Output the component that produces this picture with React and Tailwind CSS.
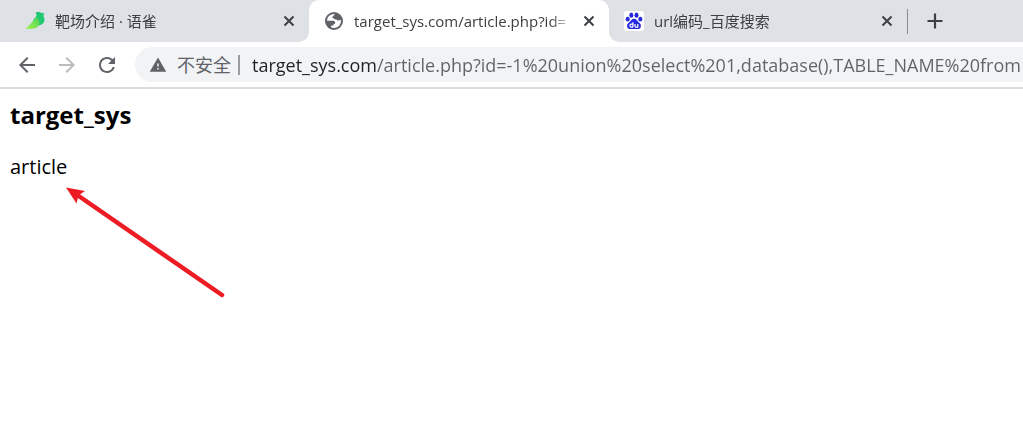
import { MdArrowBack, MdArrowForward, MdRefresh, MdWarning } from "react-icons/md";

function BirdIcon() {
  return (
    <svg viewBox="0 0 20 20" className="size-5 shrink-0" aria-hidden="true">
      <defs>
        <linearGradient id="wing" x1="0" y1="1" x2="1" y2="0">
          <stop offset="0" stopColor="#a5f04e" />
          <stop offset="1" stopColor="#48d35a" />
        </linearGradient>
      </defs>
      <path d="M10.600 2.400C11.200 1 12.600 0.600 14 0.900C15.600 1.200 16.200 2.300 19.400 2.300C19 3.200 18.500 3.800 18.600 4.800C18.800 6.600 19.800 7.600 19.400 9.700C18.900 12.300 16.500 14.300 13.500 14.600L8 9C9.800 7 11.800 5.200 11.600 3.900C11.500 3.300 11 2.900 10.600 2.400Z" fill="#21c872" />
      <path d="M11 6.400C14 7.600 15.600 11 13.900 14.200C12.200 17.400 8 18.300 0.800 17.900C3.600 14.500 8.200 10.500 11 6.400Z" fill="url(#wing)" />
    </svg>
  );
}

function GlobeIcon() {
  return (
    <svg viewBox="0 0 18 18" className="mx-px size-[18px] shrink-0" aria-hidden="true">
      <circle cx="9" cy="9" r="9" fill="#5f6368" />
      <path d="M10.200 2.100C9 2.600 8.500 3.200 8.800 4C8 4.200 7 4.500 7.200 5.800C8.500 6 9 6.500 9.200 7.300L11.500 7.400C12 8.500 13 8.800 14.500 8.300L15.900 7.800C16.500 12 13.500 16 9 16C7.800 16 6.800 15.700 6 15.300L6 13.700L8.500 13.600L8.600 12L10 11.800L10.200 10.400C9.500 9 8.500 8.700 7 8.800L2.100 8.800C2 4.800 5.500 1.600 10.200 2.100Z" fill="#fff" />
    </svg>
  );
}

function PawIcon() {
  return (
    <svg viewBox="0 0 20 20" className="size-5 shrink-0" aria-hidden="true">
      <rect width="20" height="20" rx="3" fill="#fff" />
      <g fill="#2529e0">
        <ellipse cx="7.300" cy="4.200" rx="2" ry="2.600" />
        <ellipse cx="12.500" cy="4.200" rx="2" ry="2.600" />
        <ellipse cx="3.700" cy="8.200" rx="2" ry="2.400" />
        <ellipse cx="16.300" cy="8.200" rx="2" ry="2.400" />
        <path d="M10 7.800C12.400 7.800 13 9.800 14.500 11.100C16.500 12.800 17.300 14 16.800 16C16 18.700 13.300 18 10 18S4 18.700 3.200 16C2.700 14 3.500 12.800 5.500 11.100C7 9.800 7.600 7.800 10 7.800Z" />
      </g>
      <path d="M8.900 11.300V16.200M8.900 13.200H7.300Q5.900 13.300 5.900 14.700T7.300 16.200H8.900M11 13V15.200Q11.100 16.200 12.100 16.200H13.800V13" fill="none" stroke="#fff" strokeWidth="1.200" />
    </svg>
  );
}

function CloseIcon() {
  return (
    <svg viewBox="0 0 18 18" className="size-[18px]" aria-hidden="true">
      <path d="M4.500 4.500L13.500 13.500M13.500 4.500L4.500 13.500" stroke="currentColor" strokeWidth="2" />
    </svg>
  );
}

function PlusIcon() {
  return (
    <svg viewBox="0 0 24 24" className="size-6" aria-hidden="true">
      <path d="M12 4.500V19.500M4.500 12H19.500" stroke="currentColor" strokeWidth="2.200" />
    </svg>
  );
}

function Tab({ icon, title, selected = false }) {
  return (
    <div className="flex h-full w-full items-center pr-[11px] pl-[15px]">
      <button type="button" role="tab" aria-selected={selected} className="flex min-w-0 flex-1 items-center gap-2.5 text-left">
        {icon}
        <span className="flex-1 overflow-hidden mask-r-from-[calc(100%-24px)] text-[15px] whitespace-nowrap text-[#3c4043]">
          {title}
        </span>
      </button>
      <button type="button" aria-label="关闭标签页" className="ml-1.5 text-[#3c4043]">
        <CloseIcon />
      </button>
    </div>
  );
}

export default function App() {
  return (
    <div className="min-h-screen bg-white font-['Open_Sans','Noto_Sans_CJK_SC',sans-serif]">
      <header>
        <div role="tablist" className="flex h-[42px] bg-white">
          <div className="w-[309px] min-w-0 rounded-br-[10px] bg-[#dee1e6] pl-2.5">
            <Tab icon={<BirdIcon />} title="靶场介绍 · 语雀" />
          </div>
          <div className="w-[300px] min-w-0 bg-[#dee1e6]">
            <div className="h-full rounded-t-[10px] bg-white">
              <Tab icon={<GlobeIcon />} title="target_sys.com/article.php?id=" selected />
            </div>
          </div>
          <div className="flex min-w-0 flex-1 items-center rounded-bl-[10px] bg-[#dee1e6]">
            <div className="h-full w-[298px] min-w-0">
              <Tab icon={<PawIcon />} title="url编码_百度搜索" />
            </div>
            <div className="h-[25px] w-px bg-[#8a8d91]" />
            <button type="button" aria-label="打开新的标签页" className="ml-[15px] text-[#3c4043]">
              <PlusIcon />
            </button>
          </div>
        </div>
        <div className="flex h-[47px] items-center border-b-2 border-[#dadce0] pl-[15px] text-[#5f6368]">
          <div className="flex shrink-0 gap-4">
            <button type="button" aria-label="后退"><MdArrowBack className="size-6" /></button>
            <button type="button" aria-label="前进" disabled className="text-[#babcbe]"><MdArrowForward className="size-6" /></button>
            <button type="button" aria-label="重新加载"><MdRefresh className="size-6" /></button>
          </div>
          <div className="ml-4 flex h-[35px] min-w-0 flex-1 items-center rounded-l-full bg-[#f1f3f4] pl-3.5 text-lg">
            <button type="button" className="flex shrink-0 items-center gap-2.5">
              <MdWarning className="size-[18px]" />
              <span className="whitespace-nowrap">不安全</span>
            </button>
            <div className="ml-[7px] h-5 w-0.5 shrink-0 bg-[#9a9da0]" />
            <input
              type="text"
              aria-label="地址"
              defaultValue="target_sys.com/article.php?id=-1%20union%20select%201,database(),TABLE_NAME%20from"
              className="ml-3 min-w-0 flex-1 bg-linear-to-r from-[#202124] from-[125px] to-[#5f6368] to-[125px] bg-clip-text text-transparent caret-[#202124] outline-none"
            />
          </div>
        </div>
      </header>
      <main className="px-2.5 pt-2.5 text-black">
        <h3 className="text-2xl font-bold">target_sys</h3>
        <p className="mt-[22px] text-xl">article</p>
        <svg viewBox="0 0 162 114" className="mt-1 ml-[54px] w-[162px] text-[#ed1c24]" aria-hidden="true">
          <path d="M14 10.500L158 110" stroke="currentColor" strokeWidth="4.500" strokeLinecap="round" />
          <path d="M2 2.500L21 6L14.500 10.500L12.500 18.500Z" fill="currentColor" />
        </svg>
      </main>
    </div>
  );
}
